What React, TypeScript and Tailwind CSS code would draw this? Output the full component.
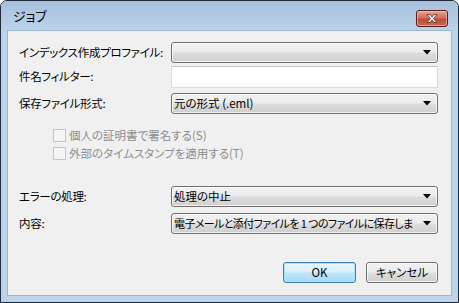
import React from "react";

function Arrow() {
  return (
    <svg width="8" height="5" viewBox="0 0 8 5" className="shrink-0">
      <path d="M0 0h8L4 4.5z" fill="#000" />
    </svg>
  );
}

function Dropdown({ value, tight }: { value?: string; tight?: boolean }) {
  return (
    <div className="w-[267px] h-[21px] rounded-[3px] border border-[#707070] bg-[linear-gradient(#f2f2f2_0%,#ebebeb_48%,#dddddd_52%,#cfcfcf_100%)] shadow-[inset_0_0_0_1px_rgba(255,255,255,0.7)] flex items-center pl-[2px] pr-[6px] gap-[6px]">
      <span
        className={`flex-1 overflow-hidden whitespace-nowrap text-black leading-[19px] ${
          tight ? "text-[11px] tracking-[-0.6px]" : ""
        }`}
      >
        {value}
      </span>
      <Arrow />
    </div>
  );
}

function Row({ label, children, className }: { label: string; children: React.ReactNode; className?: string }) {
  return (
    <div className={`flex items-center ${className ?? ""}`}>
      <span className="w-[152px] text-black whitespace-nowrap tracking-[-0.3px]">{label}</span>
      {children}
    </div>
  );
}

function Check({ label, className }: { label: string; className?: string }) {
  return (
    <div className={`flex items-center h-[17px] pl-[34px] gap-[3px] ${className ?? ""}`}>
      <span className="w-[13px] h-[13px] border border-[#c5c5c5] bg-[#f5f5f5]" />
      <span className="text-[#8d8d8d] whitespace-nowrap">{label}</span>
    </div>
  );
}

export default function App() {
  return (
    <div
      className="w-[459px] h-[303px] bg-white text-[11.5px] [font-feature-settings:'palt']"
      style={{ fontFamily: '"Noto Sans CJK JP", "Noto Sans", sans-serif' }}
    >
      <div className="w-full h-full rounded-t-[7px] border border-[#1e2b3a] bg-[#bdd3eb] flex flex-col">
        {/* Title bar */}
        <div className="h-[29px] shrink-0 rounded-t-[6px] bg-[linear-gradient(#a6c0dd,#bcd2ea)] flex items-start">
          <span className="ml-[12px] mt-[7px] text-[13px] text-black leading-[16px]">ジョブ</span>
          <div className="ml-auto mr-[10px] mt-[9px] w-[32px] h-[17px] rounded-[3px] border border-[#5a1a16] bg-[linear-gradient(#e8a393_0%,#d46f5e_45%,#c14a36_55%,#cb6a55_100%)] shadow-[inset_0_0_0_1px_rgba(255,220,210,0.5)] flex items-center justify-center">
            <svg width="14" height="11" viewBox="0 0 14 11">
              <path
                d="M2 1.5h3L7 4l2-2.5h3L8.5 5.5 12 9.5H9L7 7 5 9.5H2l3.5-4z"
                fill="#fff"
                stroke="#5b2a24"
                strokeWidth="0.8"
                strokeLinejoin="round"
              />
            </svg>
          </div>
        </div>

        {/* Client area */}
        <div className="mx-[6px] mb-[6px] flex-1 border border-[#9fb6cf] bg-[#f0f0f0] pl-[11px] flex flex-col">
          <Row label="インデックス作成プロファイル:" className="mt-[11px] h-[21px]">
            <Dropdown />
          </Row>
          <Row label="件名フィルター:" className="mt-[3px] h-[22px]">
            <div className="w-[267px] h-[22px] border border-[#d9dde3] border-t-[#c4c8ce] bg-white" />
          </Row>
          <Row label="保存ファイル形式:" className="mt-[5px] h-[21px]">
            <Dropdown value="元の形式 (.eml)" />
          </Row>
          <Check label="個人の証明書で署名する(S)" className="mt-[13px]" />
          <Check label="外部のタイムスタンプを適用する(T)" className="mt-[1px]" />
          <Row label="エラーの処理:" className="mt-[24px] h-[21px]">
            <Dropdown value="処理の中止" />
          </Row>
          <Row label="内容:" className="mt-[6px] h-[21px]">
            <Dropdown value="電子メールと添付ファイルを 1 つのファイルに保存しま" tight />
          </Row>
          <div className="mt-[28px] flex justify-end gap-[10px] pr-[13px]">
            <button className="w-[73px] h-[21px] rounded-[3px] border border-[#3c7fb1] bg-[linear-gradient(#eaf6fd_0%,#d9f0fc_48%,#bee6fd_52%,#a7d9f5_100%)] shadow-[inset_0_0_0_1px_#a6e2ff] text-black leading-none">
              OK
            </button>
            <button className="w-[72px] h-[21px] rounded-[3px] border border-[#707070] bg-[linear-gradient(#f2f2f2_0%,#ebebeb_48%,#dddddd_52%,#cfcfcf_100%)] shadow-[inset_0_0_0_1px_rgba(255,255,255,0.7)] text-black leading-none">
              キャンセル
            </button>
          </div>
        </div>
      </div>
    </div>
  );
}
